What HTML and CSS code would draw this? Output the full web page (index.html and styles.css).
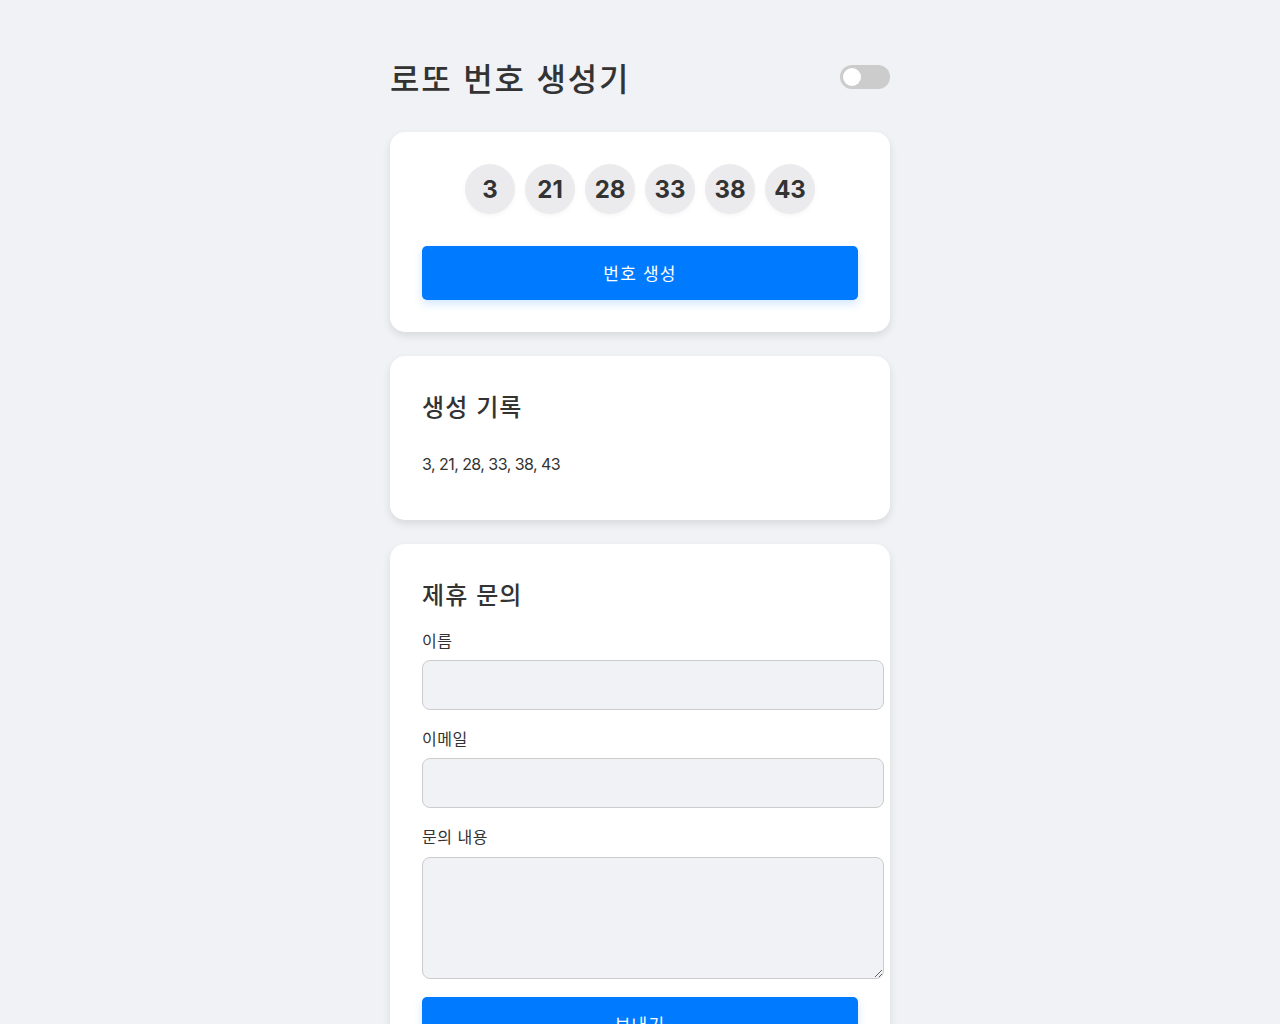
FILE: index.html
```html
<!DOCTYPE html>
<html lang="ko">
<head>
<meta charset="utf-8">
<title>로또 번호 생성기</title>
<link rel="stylesheet" href="styles.css">
</head>
<body>
<div class="container">
  <header class="header">
    <h1 class="title">로또 번호 생성기</h1>
    <label class="switch"><span class="knob"></span></label>
  </header>

  <section class="card">
    <div class="balls">
      <div class="ball">3</div>
      <div class="ball">21</div>
      <div class="ball">28</div>
      <div class="ball">33</div>
      <div class="ball">38</div>
      <div class="ball">43</div>
    </div>
    <button class="btn">번호 생성</button>
  </section>

  <section class="card">
    <h2 class="card-title">생성 기록</h2>
    <ul class="history">
      <li class="history-item">3, 21, 28, 33, 38, 43</li>
    </ul>
  </section>

  <section class="card">
    <h2 class="card-title">제휴 문의</h2>
    <form class="form">
      <label class="label" for="name">이름</label>
      <input class="field" id="name" type="text">
      <label class="label" for="email">이메일</label>
      <input class="field" id="email" type="email">
      <label class="label label-area" for="msg">문의 내용</label>
      <textarea class="field area" id="msg"></textarea>
      <button class="btn send" type="button">보내기</button>
    </form>
  </section>
</div>
</body>
</html>
```

FILE: styles.css
```css
* { margin: 0; padding: 0; }
body {
  background: #f0f2f5;
  font-family: Inter, "Noto Sans CJK KR", sans-serif;
  color: #333;
}
.container {
  width: 500px;
  margin: 0 auto;
  padding-top: 53px;
}
.header {
  display: flex;
  align-items: center;
  justify-content: space-between;
  height: 48px;
  margin-bottom: 31px;
}
.title {
  font-family: "Noto Sans CJK KR", sans-serif;
  font-size: 32px;
  font-weight: 500;
  line-height: 48px;
  color: #333;
  letter-spacing: 1.8px;
}
.switch {
  position: relative;
  display: block;
  width: 50px;
  height: 24px;
  border-radius: 12px;
  background: #ccc;
}
.knob {
  position: absolute;
  left: 3px;
  top: 3px;
  width: 18px;
  height: 18px;
  border-radius: 50%;
  background: #fff;
}
.card {
  background: #fff;
  border-radius: 15px;
  padding: 32px;
  margin-bottom: 24px;
  box-shadow: 0 4px 8px rgba(0, 0, 0, 0.1);
}
.balls {
  display: flex;
  justify-content: center;
  gap: 10px;
}
.ball {
  width: 50px;
  height: 50px;
  border-radius: 50%;
  background: #ebebed;
  display: flex;
  align-items: center;
  justify-content: center;
  font-size: 24px;
  font-weight: 700;
  color: #333;
  box-shadow: 0 2px 4px rgba(0, 0, 0, 0.04);
}
.btn {
  display: block;
  width: 100%;
  height: 54px;
  margin-top: 32px;
  border: none;
  border-radius: 5px;
  background: #007bff;
  color: #fff;
  font-family: "Noto Sans CJK KR", sans-serif;
  font-size: 17px;
  letter-spacing: 1.2px;
  padding-bottom: 2px;
  box-shadow: 0 4px 10px rgba(0, 123, 255, 0.18);
}
.card-title {
  font-family: "Noto Sans CJK KR", sans-serif;
  font-size: 24px;
  font-weight: 500;
  line-height: 36px;
  margin-bottom: 16px;
  letter-spacing: 1.1px;
}
.history {
  list-style: none;
}
.history-item {
  font-size: 16px;
  line-height: 24px;
  padding: 12px 0;
  color: #333;
  letter-spacing: -0.55px;
}
.form {
  display: block;
}
.label {
  display: block;
  font-family: "Noto Sans CJK KR", sans-serif;
  font-size: 16px;
  line-height: 24px;
  margin-bottom: 8px;
  letter-spacing: 0.5px;
}
.label-area {
  margin-bottom: 9px;
}
.field {
  display: block;
  width: 100%;
  height: 24px;
  padding: 12px;
  border: 1px solid #ccc;
  border-radius: 8px;
  background: #f0f2f5;
  font-size: 16px;
  margin-bottom: 16px;
  box-sizing: content-box;
}
.area {
  height: 96px;
  margin-bottom: 18px;
}
.send {
  margin-top: 0;
}
```
